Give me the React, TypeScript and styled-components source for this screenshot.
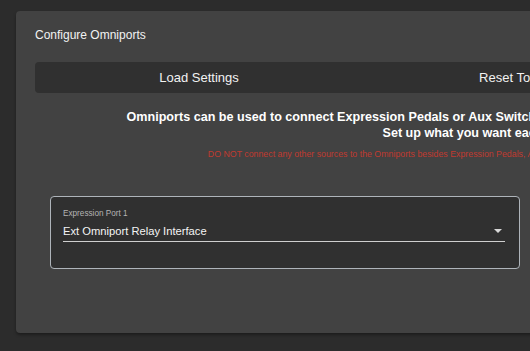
import styled, { createGlobalStyle } from "styled-components";

const GlobalStyle = createGlobalStyle`
  html, body {
    margin: 0;
    padding: 0;
    background: #2c2c2c;
    font-family: "Liberation Sans", Arial, sans-serif;
    overflow: hidden;
  }
`;

const Page = styled.div`
  width: 530px;
  height: 351px;
  overflow: hidden;
  padding: 11px 0 0 16px;
  box-sizing: border-box;
`;

const Panel = styled.div`
  width: 1022px;
  height: 322px;
  background: #424242;
  border-radius: 4px;
  box-shadow: 0 2px 3px rgba(0, 0, 0, 0.35);
  padding: 17px 19px 0 19px;
  box-sizing: border-box;
  display: flex;
  flex-direction: column;
`;

const Title = styled.div`
  color: #f2f2f2;
  font-size: 12px;
  line-height: 14px;
`;

const ButtonRow = styled.div`
  margin-top: 20px;
  display: flex;
  background: #303030;
  border-radius: 4px;
  height: 31px;
`;

const BarButton = styled.button`
  flex: 1;
  background: transparent;
  border: none;
  color: #f2f2f2;
  font-family: inherit;
  font-size: 13px;
  cursor: pointer;
`;

const Intro = styled.div`
  margin-top: 16px;
  text-align: center;
  color: #ffffff;
  font-size: 12.6px;
  font-weight: bold;
  line-height: 16px;
  white-space: nowrap;
`;

const Warning = styled.div`
  margin-top: 7px;
  text-align: center;
  color: #c03a30;
  font-size: 8.8px;
  line-height: 12px;
  white-space: nowrap;
`;

const PortGrid = styled.div`
  margin-top: 36px;
  padding: 0 15px;
  display: grid;
  grid-template-columns: repeat(2, 470px);
  gap: 15px;
`;

const PortBox = styled.div`
  height: 73px;
  box-sizing: border-box;
  border: 1px solid #aeb4ba;
  border-radius: 4px;
  background: #303030;
  padding: 12px 14px 0 12px;
`;

const PortLabel = styled.div`
  color: #b4b4b4;
  font-size: 8.2px;
  line-height: 10px;
`;

const SelectRow = styled.div`
  margin-top: 3px;
  display: flex;
  align-items: center;
  justify-content: space-between;
  height: 17px;
  border-bottom: 1px solid #cfcfcf;
  padding-bottom: 2px;
`;

const SelectValue = styled.span`
  color: #f4f4f4;
  font-size: 11.2px;
`;

const Caret = styled.svg`
  width: 8px;
  height: 4px;
  margin-right: 3px;
`;

export default function App() {
  return (
    <>
      <GlobalStyle />
      <Page>
        <Panel>
          <Title>Configure Omniports</Title>
          <ButtonRow>
            <BarButton>Load Settings</BarButton>
            <BarButton>Reset To Default</BarButton>
            <BarButton>Save Settings</BarButton>
          </ButtonRow>
          <Intro>
            Omniports can be used to connect Expression Pedals or Aux Switches, including the Omniport Relay Interface, to your Axe-Fx III unit.
            <br />
            Set up what you want each Omniport to do here.
          </Intro>
          <Warning>
            DO NOT connect any other sources to the Omniports besides Expression Pedals, Aux Switches or the Omniport Relay Interface. Damage may occur to your device.
          </Warning>
          <PortGrid>
            <PortBox>
              <PortLabel>Expression Port 1</PortLabel>
              <SelectRow>
                <SelectValue>Ext Omniport Relay Interface</SelectValue>
                <Caret viewBox="0 0 8 4">
                  <path d="M0 0 L8 0 L4 4 Z" fill="#d8d8d8" />
                </Caret>
              </SelectRow>
            </PortBox>
            <PortBox>
              <PortLabel>Expression Port 2</PortLabel>
              <SelectRow>
                <SelectValue>Expression Pedal</SelectValue>
                <Caret viewBox="0 0 8 4">
                  <path d="M0 0 L8 0 L4 4 Z" fill="#d8d8d8" />
                </Caret>
              </SelectRow>
            </PortBox>
          </PortGrid>
        </Panel>
      </Page>
    </>
  );
}
